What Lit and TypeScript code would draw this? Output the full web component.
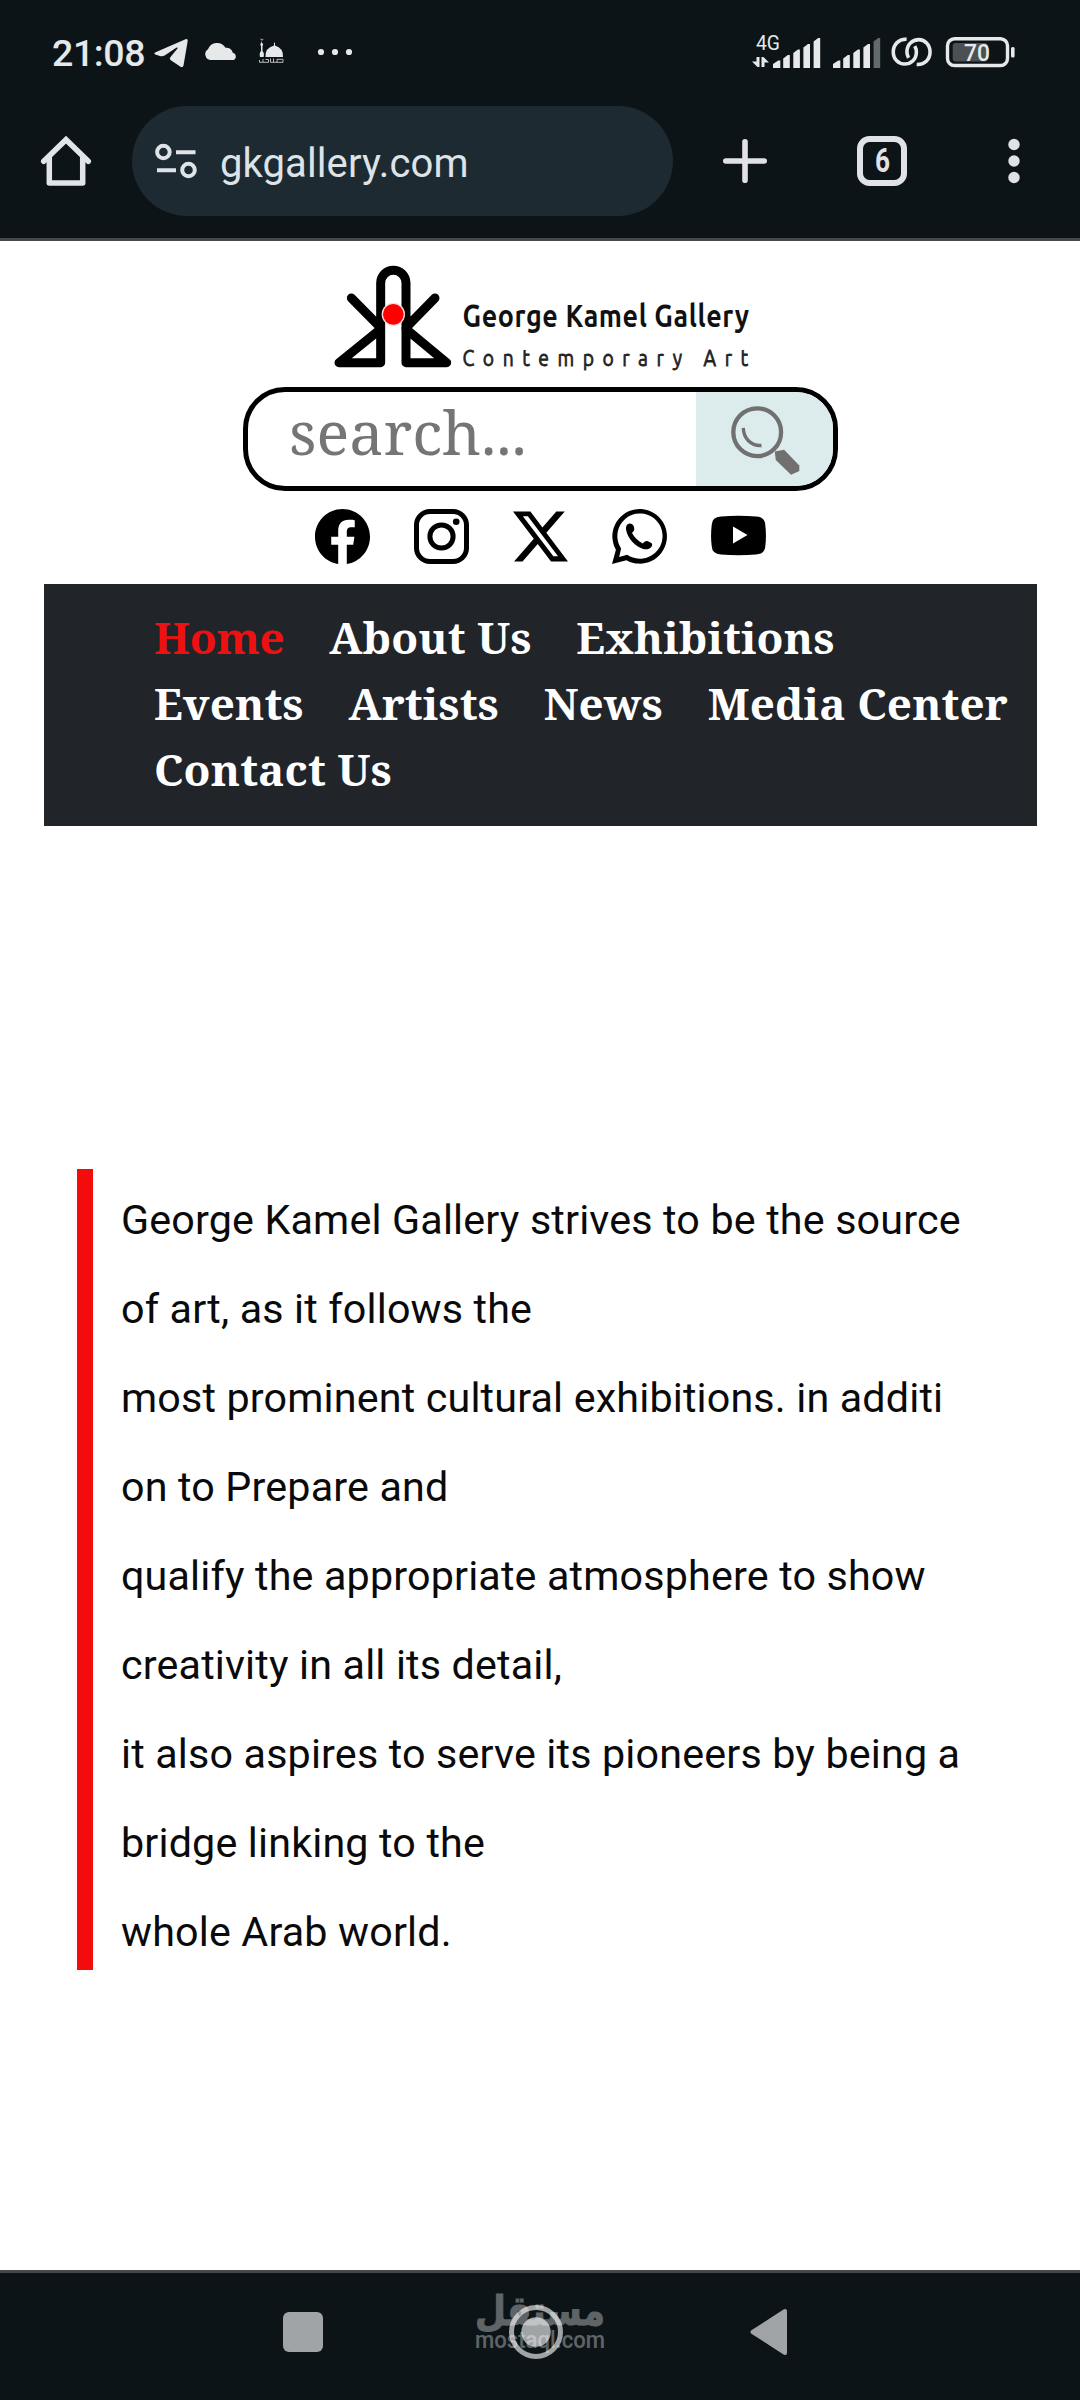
import { LitElement, html, css, svg } from "lit";
import { customElement } from "lit/decorators.js";
import { classMap } from "lit/directives/class-map.js";

const ICONS = {
  facebook: svg`<svg viewBox="0 0 16 16"><path d="M16 8.049c0-4.446-3.582-8.05-8-8.05C3.58 0-.002 3.603-.002 8.05c0 4.017 2.926 7.347 6.75 7.951v-5.625h-2.03V8.05H6.75V6.275c0-2.017 1.195-3.131 3.022-3.131.876 0 1.791.157 1.791.157v1.98h-1.009c-.993 0-1.303.621-1.303 1.258v1.51h2.218l-.354 2.326H9.25V16c3.824-.604 6.75-3.934 6.75-7.951"/></svg>`,
  instagram: svg`<svg viewBox="0 0 55 55"><g fill="none" stroke="#000" stroke-width="5"><rect x="2.5" y="2.5" width="50" height="50" rx="13.5"/><circle cx="27.5" cy="27.5" r="11.6"/></g><circle cx="42.2" cy="12.8" r="3.3"/></svg>`,
  x: svg`<svg viewBox="0 0 16 16"><path d="M12.6.75h2.454l-5.36 6.142L16 15.25h-4.937l-3.867-5.07-4.425 5.07H.316l5.733-6.57L0 .75h5.063l3.495 4.633L12.601.75Zm-.86 13.028h1.36L4.323 2.145H2.865z"/></svg>`,
  whatsapp: svg`<svg viewBox="0 0 55 55"><path fill-rule="evenodd" d="M0 55 3.9 40.8A27.3 27.3 0 1 1 14.4 51.2ZM7.2 47.9l8-2.2A22.6 22.6 0 1 0 9.1 39.5Z"/><path d="M14.600 16.500c1-2 3.600-2.600 5.600-1.300 1.500 1 2.400 3.600 2 5.500-.3 1.300-1.300 2.200-2.200 3.300 2.400 4.400 6.300 8.200 10.800 10.500 1.500-1.800 3-3 5.200-2.300l3.300 1.800c1.300.9 1 2.800 0 4-2 2.500-5.500 2.800-8.700 1.700-7.600-2.600-14.600-10.200-16.300-18-.4-1.900-.5-3.600.3-5.200Z"/></svg>`,
  youtube: svg`<svg viewBox="0 0 55 55"><path fill-rule="evenodd" d="M10 7.600Q27.500 6 45 7.600Q54 8 54.300 16Q55.600 27 54.300 37Q54 45 45 45.400Q27.500 47 10 45.400Q1 45 .7 37Q-.6 27 .7 16Q1 8 10 7.600ZM22 17.500V34.500L36.500 26Z"/></svg>`,
};

// Signal bars: x, top, width.
const BARS = [
  [0, 22.5, 7.3],
  [10.2, 17, 6.6],
  [20.3, 11.5, 6.6],
  [30.4, 6, 6.6],
  [40.6, 0, 6.6],
];

const NAV = ["Home", "About Us", "Exhibitions", "Events", "Artists", "News", "Media Center", "Contact Us"];

const INTRO = [
  "George Kamel Gallery strives to be the source",
  "of art, as it follows the",
  "most prominent cultural exhibitions. in additi",
  "on to Prepare and",
  "qualify the appropriate atmosphere to show",
  "creativity in all its detail,",
  "it also aspires to serve its pioneers by being a",
  "bridge linking to the",
  "whole Arab world.",
];

const signal = (full: boolean) => svg`<svg class="signal" viewBox="0 0 48 30">${BARS.map(
  ([x, y, w], i) => svg`<path fill=${i === 4 && !full ? "#64696b" : "#e6e8e9"} d="M${x} 30V${y + 3.5}L${x + w - 2} ${y}H${x + w}V30Z"/>`
)}</svg>`;

@customElement("browser-chrome")
export class BrowserChrome extends LitElement {
  static styles = css`
    :host { display: block; height: 238px; background: #0c1417; border-bottom: 3px solid #44494b; font-family: Roboto, "Liberation Sans", sans-serif; color: #e6e8e9; }
    svg { display: block; flex: none; overflow: visible; }
    .status { display: flex; align-items: center; height: 104px; padding-left: 52px; margin-bottom: 2px; }
    .time { font-size: 37.5px; font-weight: 500; width: 101px; white-space: nowrap; letter-spacing: -0.4px; margin-top: 2px; }
    .notes { width: 205px; height: 32px; }
    .net { width: 32px; height: 34px; margin-left: 393px; }
    .signal { width: 48px; height: 30px; margin-top: 1px; }
    .signal + .signal { margin-left: 12px; }
    .cell { display: flex; margin-left: -10px; }
    .link { width: 41px; height: 30px; margin-left: 10px; }
    .battery { width: 70px; height: 32px; margin-left: 13px; }
    .bar { display: flex; align-items: center; height: 110px; }
    .home { width: 50px; height: 50px; margin: 0 41px; }
    .address { display: flex; align-items: center; box-sizing: border-box; width: 541px; height: 110px; border-radius: 55px; background: #1d2a31; padding-left: 23px; color: #dee3e8; }
    .tune { width: 42px; height: 36px; }
    .url { font-size: 40px; margin-left: 23px; letter-spacing: 0.1px; line-height: 48px; margin-top: 5px; }
    .plus { width: 46px; height: 46px; margin-left: 49px; }
    .tabs { width: 50px; height: 50px; margin-left: 89px; }
    .menu { width: 12px; height: 46px; margin-left: 101px; }
  `;
  render() {
    return html`
      <div class="status">
        <span class="time">21:08</span>
        <svg class="notes" viewBox="153 36 205 32" fill="#e6e8e9">
          <path d="M155 52.5 185.5 39.3Q188 38.5 187.7 41L183.500 65.5Q182.800 68 180.500 66.7L170.500 60Q169 58.500 170.500 57L177.500 48.500Q178 47 176.200 47.700L165 55.300Q162.500 56.800 160 56L155.200 54.500Q153.500 53.500 155 52.5Z"/>
          <path d="M210.500 60A5.800 5.800 0 0 1 208 49.300 9.800 9.800 0 0 1 225.500 47.800 7 7 0 0 1 232.800 52.700 4 4 0 0 1 234 60Z"/>
          <path d="M265.500 57Q264.800 48 274 45.500V43L274.500 42.500 275 43V45.500Q283.500 48 283 57ZM260 57Q259 53 261 51V45.500H260.400V43.500H261L261.500 41 262.200 43.500H263V45.500H262.500V51Q264.600 53 263.600 57Z"/>
          <path d="M260.800 38.600Q261 41 263.300 39.600M259.500 60V62.300H268.500V59.500H265.500M270.500 58.500V62.300H283V59.300H277V62M273.500 58.500V62M263 62V59" fill="none" stroke="#c9cccd" stroke-width=".9"/>
          <circle cx="321" cy="52" r="3.1"/><circle cx="335" cy="52" r="3.1"/><circle cx="349" cy="52" r="3.1"/>
        </svg>
        <svg class="net" viewBox="752 35 32 34" fill="#e6e8e9">
          <text x="757" y="50" font-size="20" textLength="24" lengthAdjust="spacingAndGlyphs">4G</text>
          <path d="M757.5 57H760.5V67H758.5L753 61.5H757.5ZM762.5 67V57H764.5L770 62.5H765.5V67Z"/>
        </svg>
        <div class="cell">${signal(true)}${signal(false)}</div>
        <svg class="link" viewBox="438 22 126 90" fill="none" stroke="#e6e8e9" stroke-width="11">
          <path d="M486 28C462 26 445 44 445 67C445 90 462 104 479 104C500 104 516 89 516 67Q516 58 511 49"/>
          <path d="M517 105C541 107 558 90 558 67C558 44 541 29 524 29C503 29 487 44 487 67Q487 76 492 85"/>
        </svg>
        <svg class="battery" viewBox="945 36 70 32">
          <rect x="947.5" y="38.7" width="60" height="26.8" rx="7" fill="none" stroke="#e6e8e9" stroke-width="3.4"/>
          <rect x="952.7" y="43" width="35" height="18.6" rx="3" fill="#4b5052"/>
          <rect x="1011" y="47" width="3.6" height="10.5" rx="1.5" fill="#e6e8e9"/>
          <text x="964" y="60.8" font-size="23.5" font-weight="500" fill="#e6e8e9" textLength="26" lengthAdjust="spacingAndGlyphs">70</text>
        </svg>
      </div>
      <div class="bar">
        <svg class="home" viewBox="0 0 50 50" fill="none" stroke="#e1e4e8" stroke-width="5.5" stroke-linejoin="round" stroke-linecap="round">
          <path d="M2.700 25.300 25 3.700 47.300 25.300" stroke-linejoin="miter"/><path d="M8.300 21V47H41.700V21"/>
        </svg>
        <div class="address">
          <svg class="tune" viewBox="155 143 42 36" fill="none" stroke="#dee3e8" stroke-width="4">
            <circle cx="163.4" cy="152" r="6.3"/><path d="M176 152.300H195.500M157 170.300H176"/><circle cx="188.5" cy="170" r="6.3"/>
          </svg>
          <span class="url">gkgallery.com</span>
        </div>
        <svg class="plus" viewBox="0 0 46 46" stroke="#e1e2e7" stroke-width="5.6" stroke-linecap="round"><path d="M23 3.800V42.200M3.800 23H42.200"/></svg>
        <svg class="tabs" viewBox="0 0 50 50">
          <rect x="3" y="3" width="44" height="44" rx="9.5" fill="none" stroke="#e1e2e7" stroke-width="6"/>
          <text x="18" y="36" font-size="33" font-weight="700" fill="#e1e2e7" textLength="15" lengthAdjust="spacingAndGlyphs">6</text>
        </svg>
        <svg class="menu" viewBox="0 0 12 46" fill="#e1e2e7"><circle cx="6" cy="6.5" r="5.7"/><circle cx="6" cy="23" r="5.7"/><circle cx="6" cy="39.5" r="5.7"/></svg>
      </div>
    `;
  }
}

@customElement("gallery-page")
export class GalleryPage extends LitElement {
  static styles = css`
    :host { display: block; height: 2029px; box-sizing: border-box; background: #fff; font-family: "Noto Serif", "DejaVu Serif", serif; overflow: hidden; }
    svg { display: block; overflow: visible; }
    .logo { width: 420px; height: 110px; margin: 22px 0 0 332px; font-family: Ubuntu, "Noto Sans", sans-serif; }
    .search { display: flex; box-sizing: border-box; width: 595px; height: 104px; margin: 14px 0 0 243px; border: 5px solid #000; border-radius: 42px; overflow: hidden; }
    .field { flex: 1; padding-left: 41px; font-size: 61px; line-height: 79px; color: #757575; white-space: nowrap; }
    .go { width: 137px; background: #dcebeb; }
    .glass { width: 70px; height: 71px; margin: 12px 0 0 34px; }
    .social { display: flex; gap: 44px; margin: 18px 0 0 315px; }
    .social svg { width: 55px; height: 55px; }
    .nav { display: flex; flex-wrap: wrap; column-gap: 44.8px; box-sizing: border-box; width: 993px; height: 242px; margin: 20px 0 0 44px; padding: 20px 20px 24px 110px; background: #212429; color: #fff; font-size: 44px; font-weight: 700; line-height: 66px; letter-spacing: 0.12px; }
    .item { white-space: nowrap; }
    .active { color: #ed1111; letter-spacing: -0.3px; }
    .intro { box-sizing: border-box; height: 801px; margin: 343px 77px 0; padding: 6.6px 0 0 28px; border-left: 16px solid #f40c0c; font: 41.25px/89.06px Roboto, "Liberation Sans", sans-serif; letter-spacing: 0.16px; color: #0a0a0a; }
    .line { white-space: nowrap; }
  `;
  render() {
    return html`
      <svg class="logo" viewBox="332 263 420 110">
        <g transform="translate(320 255) scale(.33333)">
          <g fill="none" stroke="#000" stroke-width="27" stroke-linejoin="round" stroke-linecap="round">
            <path d="M182 220V84A38 38 0 0 1 258 84V220M94 129 180 216M345 129 260 216"/>
            <path d="M182 323V222L57 323ZM258 323V222L380 323Z"/>
          </g>
          <circle cx="220" cy="178" r="35" fill="#ffd9d9"/><circle cx="220" cy="178" r="31" fill="#f00"/>
        </g>
        <text transform="translate(462.5 327) scale(.84 1)" font-size="32" font-weight="700" fill="#111" textLength="341" lengthAdjust="spacing">George Kamel Gallery</text>
        <text transform="translate(462.5 365.5) scale(.84 1)" font-size="23" fill="#222" stroke="#222" stroke-width=".8" textLength="340" lengthAdjust="spacing">Contemporary Art</text>
      </svg>
      <div class="search">
        <div class="field">search...</div>
        <div class="go">
          <svg class="glass" viewBox="120 75 211 214" fill="none" stroke="#707070">
            <circle cx="202" cy="160" r="72" stroke-width="13"/>
            <path d="M160 147C161 178 182 202 215 200" stroke-width="10"/>
            <path d="M255 218 283 213 329 260V277L304 288 258 244Z" fill="#707070" stroke="none"/>
          </svg>
        </div>
      </div>
      <div class="social">${Object.values(ICONS)}</div>
      <nav class="nav">${NAV.map((n, i) => html`<span class=${classMap({ item: true, active: i === 0 })}>${n}</span>`)}</nav>
      <div class="intro">${INTRO.map((t) => html`<div class="line">${t}</div>`)}</div>
    `;
  }
}

@customElement("system-nav")
export class SystemNav extends LitElement {
  static styles = css`
    :host { display: flex; align-items: flex-start; position: relative; box-sizing: border-box; height: 130px; background: #0c1417; border-top: 3px solid #44494b; padding: 35px 0 0 283px; }
    svg { display: block; flex: none; overflow: visible; }
    .recent { width: 40px; height: 40px; border-radius: 6px; background: #a1a4a6; margin-top: 4px; }
    .circle { width: 54px; height: 54px; margin: -3px 0 0 186px; }
    .back { width: 38px; height: 48px; margin-left: 187px; }
    .mark { position: absolute; left: 465px; top: 9px; width: 150px; height: 80px; opacity: 0.34; }
  `;
  render() {
    return html`
      <div class="recent"></div>
      <svg class="circle" viewBox="0 0 54 54"><circle cx="27" cy="27" r="24.5" fill="none" stroke="#a1a4a6" stroke-width="5"/><circle cx="27" cy="27" r="14.7" fill="#a1a4a6"/></svg>
      <svg class="back" viewBox="0 0 38 48"><path d="M2.500 24 35 3V45Z" fill="#a1a4a6" stroke="#a1a4a6" stroke-width="4" stroke-linejoin="round"/></svg>
      <svg class="mark" viewBox="465 2282 150 80" fill="#fff">
        <text x="540" y="2325" text-anchor="middle" direction="rtl" font-family="DejaVu Sans, sans-serif" font-weight="700" font-size="41" stroke="#fff" stroke-width="1" textLength="130" lengthAdjust="spacingAndGlyphs">مستقل</text>
        <text x="475" y="2347.5" font-family="Roboto, sans-serif" font-weight="500" font-size="23.5" textLength="130" lengthAdjust="spacingAndGlyphs">mostaql.com</text>
      </svg>
    `;
  }
}

@customElement("app-root")
export class AppRoot extends LitElement {
  static styles = css`
    :host { display: block; width: 1080px; height: 2400px; overflow: hidden; background: #fff; }
  `;
  render() {
    return html`<browser-chrome></browser-chrome><gallery-page></gallery-page><system-nav></system-nav>`;
  }
}
